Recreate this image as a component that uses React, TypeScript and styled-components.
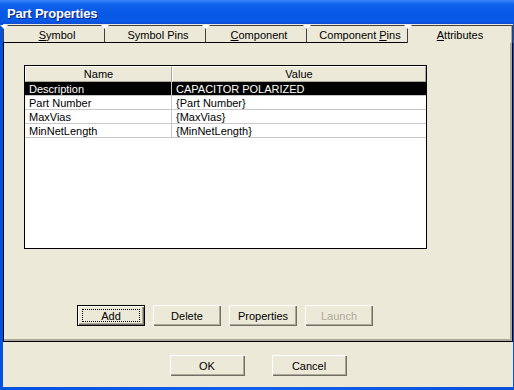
import React from "react";
import styled, { createGlobalStyle } from "styled-components";

const GlobalStyle = createGlobalStyle`
  html, body {
    margin: 0;
    padding: 0;
    width: 514px;
    height: 390px;
    overflow: hidden;
    background: #ece9d8;
  }
  * {
    box-sizing: border-box;
  }
`;

type Attr = { name: string; value: string };

const attributes: Attr[] = [
  { name: "Description", value: "CAPACITOR POLARIZED" },
  { name: "Part Number", value: "{Part Number}" },
  { name: "MaxVias", value: "{MaxVias}" },
  { name: "MinNetLength", value: "{MinNetLength}" },
];

const tabs = [
  { label: "Symbol", key: "S", rest: "ymbol" },
  { label: "Symbol Pins", key: "", rest: "Symbol Pins" },
  { label: "Component", key: "C", rest: "omponent" },
  { label: "Component Pins", key: "", rest: "Component Pins", pinKey: true },
  { label: "Attributes", key: "A", rest: "ttributes", active: true },
];

const App = () => {
  return (
    <>
      <GlobalStyle />
      <Window>
        <TitleBar>
          <TitleText>Part Properties</TitleText>
        </TitleBar>
        <Frame>
          <TabStrip>
            {tabs.map((t) => (
              <Tab key={t.label} $active={!!t.active}>
                <Notch />
                {t.pinKey ? (
                  <span>
                    Component <u>P</u>ins
                  </span>
                ) : (
                  <span>
                    {t.key && <u>{t.key}</u>}
                    {t.rest}
                  </span>
                )}
              </Tab>
            ))}
          </TabStrip>
          <Panel>
            <Table>
              <HeaderRow>
                <HeaderCell $w={147}>Name</HeaderCell>
                <HeaderCell $w={254}>Value</HeaderCell>
              </HeaderRow>
              {attributes.map((a, i) => (
                <Row key={a.name} $selected={i === 0}>
                  <Cell $w={147}>{a.name}</Cell>
                  <Cell $w={254}>{a.value}</Cell>
                </Row>
              ))}
            </Table>
            <ButtonRow>
              <Button $default>
                <FocusRect>Add</FocusRect>
              </Button>
              <Button>Delete</Button>
              <Button>Properties</Button>
              <Button disabled>Launch</Button>
            </ButtonRow>
          </Panel>
          <Footer>
            <DialogButton>OK</DialogButton>
            <DialogButton>Cancel</DialogButton>
          </Footer>
        </Frame>
      </Window>
    </>
  );
};

const Window = styled.div`
  width: 514px;
  height: 390px;
  display: flex;
  flex-direction: column;
  background: linear-gradient(90deg, #0052e0 0%, #1260ee 50%, #0a50d8 100%);
  font-family: "Liberation Sans", Arial, sans-serif;
  font-size: 11px;
  color: #000;
`;

const TitleBar = styled.div`
  height: 24px;
  display: flex;
  align-items: center;
  padding: 3px 0 0 7px;
  background: linear-gradient(
    180deg,
    #3a86fa 0%,
    #0f62ec 18%,
    #0758e6 55%,
    #0a5ae8 85%,
    #0c4fd8 100%
  );
`;

const TitleText = styled.span`
  font-family: "Liberation Sans", Arial, sans-serif;
  font-weight: bold;
  font-size: 13px;
  color: #fff;
  text-shadow: 1px 1px 0 #0a1e80;
  letter-spacing: -0.2px;
`;

const Frame = styled.div`
  flex: 1;
  margin: 0 1px 3px 3px;
  background: #ece9d8;
  display: flex;
  flex-direction: column;
`;

const TabStrip = styled.div`
  display: flex;
  height: 19px;
  padding-top: 1px;
`;

const Notch = styled.i`
  position: absolute;
  left: -4px;
  top: -1px;
  width: 0;
  height: 0;
  border-left: 4px solid transparent;
  border-right: 4px solid transparent;
  border-top: 4px solid #fff;
`;

const Tab = styled.div<{ $active: boolean }>`
  position: relative;
  width: ${(p) => (p.$active ? "100px" : "101px")};
  flex: ${(p) => (p.$active ? "1" : "none")};
  height: 18px;
  display: flex;
  align-items: center;
  justify-content: center;
  border-top: 1px solid #404040;
  border-left: 1px solid #404040;
  border-right: ${(p) => (p.$active ? "1px solid #404040" : "none")};
  border-bottom: ${(p) => (p.$active ? "none" : "1px solid #000")};
  box-shadow: ${(p) => (p.$active ? "inset -1px 0 0 #aca899" : "none")};
  padding: 1px 0 0 ${(p) => (p.$active ? "0" : "6px")};
  white-space: nowrap;
  background: #ece9d8;
  & u {
    text-decoration: underline;
  }
`;

const Panel = styled.div`
  height: 299px;
  display: flex;
  flex-direction: column;
  border-left: 1px solid #000;
  border-right: 1px solid #000;
  border-bottom: 1px solid #000;
  box-shadow: inset -2px -2px 0 #aca899;
  padding: 22px 0 0 20px;
`;

const Table = styled.div`
  width: 403px;
  height: 184px;
  background: #fff;
  border: 1px solid #000;
  display: flex;
  flex-direction: column;
`;

const HeaderRow = styled.div`
  display: flex;
  height: 16px;
`;

const HeaderCell = styled.div<{ $w: number }>`
  width: ${(p) => p.$w}px;
  height: 16px;
  background: #ece9d8;
  border-top: 1px solid #fff;
  border-left: 1px solid #fff;
  border-right: 1px solid #aca899;
  border-bottom: 1px solid #aca899;
  display: flex;
  align-items: center;
  justify-content: center;
  &:last-child {
    flex: 1;
  }
`;

const Row = styled.div<{ $selected: boolean }>`
  display: flex;
  height: 14px;
  background: ${(p) => (p.$selected ? "#000" : "#fff")};
  color: ${(p) => (p.$selected ? "#fff" : "#000")};
  border-bottom: 1px solid #c8c8c8;
`;

const Cell = styled.div<{ $w: number }>`
  width: ${(p) => p.$w}px;
  padding-left: 4px;
  display: flex;
  align-items: center;
  white-space: nowrap;
  border-right: 1px solid #c8c8c8;
  &:last-child {
    flex: 1;
    border-right: none;
  }
`;

const ButtonRow = styled.div`
  display: flex;
  gap: 8px;
  margin-top: 56px;
  padding-left: 53px;
`;

const Button = styled.button<{ $default?: boolean }>`
  width: 68px;
  height: 21px;
  padding: 0;
  display: flex;
  align-items: center;
  justify-content: center;
  font-family: "Liberation Sans", Arial, sans-serif;
  font-size: 11px;
  color: #000;
  background: #ece9d8;
  border: ${(p) => (p.$default ? "1px solid #000" : "none")};
  border-radius: 0;
  box-shadow: inset 1px 1px 0 #fff, inset -1px -1px 0 #716f64,
    inset -2px -2px 0 #aca899;
  &:disabled {
    color: #aca899;
  }
`;

const FocusRect = styled.span`
  width: 58px;
  height: 13px;
  border: 1px dotted #000;
  display: flex;
  align-items: center;
  justify-content: center;
`;

const Footer = styled.div`
  flex: 1;
  display: flex;
  justify-content: center;
  align-items: flex-start;
  gap: 27px;
  padding-top: 13px;
`;

const DialogButton = styled.button`
  width: 75px;
  height: 21px;
  padding: 0;
  font-family: "Liberation Sans", Arial, sans-serif;
  font-size: 11px;
  color: #000;
  background: #ece9d8;
  border: none;
  border-radius: 0;
  box-shadow: inset 1px 1px 0 #fff, inset -1px -1px 0 #716f64,
    inset -2px -2px 0 #aca899;
`;

export default App;
